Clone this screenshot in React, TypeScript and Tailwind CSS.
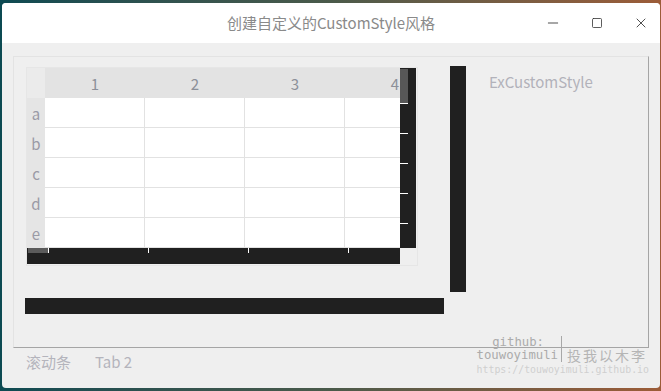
import { Minus, Square, X } from 'lucide-react';

const COLS = ['1', '2', '3', '4'];
const ROWS = ['a', 'b', 'c', 'd', 'e'];

function ScrollTable() {
  return (
    <div className="ml-[1px] mt-[1px] w-[392px] h-[199px] border border-[#e6e6e6] flex flex-col">
      <div className="flex">
        {/* viewport */}
        <div className="w-[373px] h-[180px] overflow-hidden flex flex-col">
          <div className="flex h-[30px] shrink-0">
            <div className="w-[18px] shrink-0 bg-[#ebebeb]" />
            {COLS.map((c) => (
              <div
                key={c}
                className="w-[100px] shrink-0 bg-[#e3e3e3] flex items-center justify-center pt-[2px] text-[15px] text-[#8c9099]"
              >
                {c}
              </div>
            ))}
          </div>
          {ROWS.map((r) => (
            <div key={r} className="flex h-[30px] shrink-0">
              <div className="w-[18px] shrink-0 bg-[#e5e5e5] flex items-center justify-center pt-[3px] text-[15px] text-[#9a9aa6]">
                {r}
              </div>
              {COLS.map((c) => (
                <div
                  key={c}
                  className="w-[100px] shrink-0 bg-white border-r border-b border-[#e2e2e2]"
                />
              ))}
            </div>
          ))}
        </div>
        {/* vertical scrollbar */}
        <div className="relative w-[16px] h-[180px] bg-[#202020]">
          <div className="absolute left-0 top-[1px] w-[8px] h-[34px] bg-[#5b5b5b]/95" />
          {[35, 65, 95, 125, 155].map((t) => (
            <div key={t} className="absolute left-0 w-[8px] h-[1px] bg-white" style={{ top: t }} />
          ))}
        </div>
      </div>
      <div className="flex">
        {/* horizontal scrollbar */}
        <div className="relative w-[373px] h-[16px] bg-[#202020]">
          <div className="absolute left-[1px] top-0 w-[20px] h-[5px] bg-[#5b5b5b]" />
          {[21, 121, 221, 321].map((l) => (
            <div key={l} className="absolute top-0 w-[1px] h-[5px] bg-white" style={{ left: l }} />
          ))}
        </div>
        <div className="w-[16px] h-[16px]" />
      </div>
    </div>
  );
}

function Watermark() {
  return (
    <div className="absolute right-[11px] bottom-[12px] flex flex-col items-end font-['DejaVu_Sans_Mono',monospace]">
      <div className="flex items-stretch">
        <div className="flex flex-col items-end text-[12.3px] leading-[13px] text-[#ababab]">
          <span className="pr-[14px]">github:</span>
          <span>touwoyimuli</span>
        </div>
        <div className="w-[1px] mx-[3px] bg-[#a8a8a8] h-[26px]" />
        <div className="flex flex-col justify-end w-[84px] pl-[2px]">
          <span className="text-[14px] leading-[14px] tracking-[2px] text-[#b5b5b5] font-['Noto_Sans_CJK_SC',serif]">
            投我以木李
          </span>
        </div>
      </div>
      <span className="mt-[2px] text-[9.9px] leading-[12px] text-[#cfcfcf]">
        https://touwoyimuli.github.io
      </span>
    </div>
  );
}

export default function App() {
  return (
    <div className="w-[661px] h-[391px] overflow-hidden bg-gradient-to-r from-[#0c4a52] via-[#4a5a4a] to-[#9c5c38] pt-[3px] pl-[2px] font-['Noto_Sans_CJK_SC','Noto_Sans',sans-serif]">
      <div className="relative w-[658px] h-[385px] rounded-[4px] overflow-hidden bg-[#efefef] flex flex-col">
        {/* Title bar */}
        <div className="relative h-[40px] shrink-0 bg-white flex items-center justify-center">
          <span className="text-[15px] text-[#8a8a8a]">创建自定义的CustomStyle风格</span>
          <div className="absolute right-[11px] top-0 h-full flex items-center gap-[28px] text-[#333]">
            <Minus className="w-[16px] h-[16px]" strokeWidth={1.3} />
            <Square className="w-[12px] h-[12px] mx-[2px]" strokeWidth={1.6} />
            <X className="w-[16px] h-[16px]" strokeWidth={1.3} />
          </div>
        </div>

        {/* Tab pane */}
        <div className="ml-[11px] mt-[13px] w-[636px] h-[292px] border border-[#e3e3e3] border-r-[#a5a5a5] border-b-[#a5a5a5] pl-[11px] pt-[9px] flex items-start">
          <div className="w-[419px] flex flex-col">
            <ScrollTable />
            <div className="mt-[32px] w-[419px] h-[16px] bg-[#202020]" />
          </div>
          <div className="ml-[6px] w-[16px] h-[226px] bg-[#202020]" />
          <span className="ml-[23px] mt-[5px] text-[15px] text-[#b2b2ba]">ExCustomStyle</span>
        </div>

        {/* Tabs */}
        <div className="ml-[12px] flex h-[28px] items-center text-[15px] text-[#b4b4bc]">
          <span className="px-[12px]">滚动条</span>
          <span className="px-[12px]">Tab 2</span>
        </div>

        <Watermark />
      </div>
    </div>
  );
}
